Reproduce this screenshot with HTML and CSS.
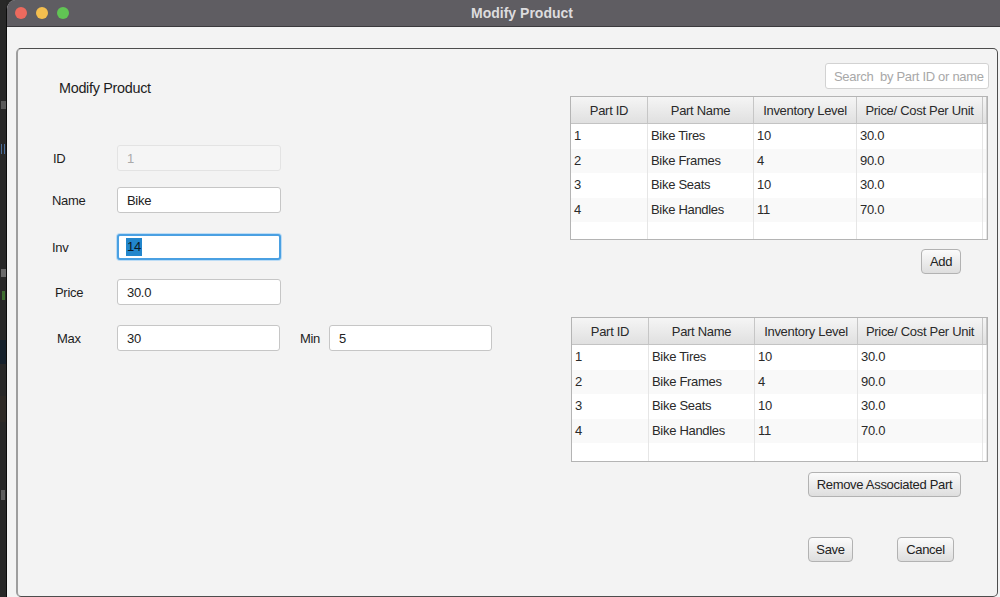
FILE: index.html
```html
<!DOCTYPE html>
<html>
<head>
<meta charset="utf-8">
<title>Modify Product</title>
<link rel="stylesheet" href="styles.css">
</head>
<body>
<div class="desktop">
  <div class="strip">
    <span class="blk blk-la"></span>
    <span class="blk blk-bars"></span>
    <span class="blk blk-e"></span>
    <span class="blk blk-t"></span>
    <span class="blk blk-blue"></span>
    <span class="blk blk-brown"></span>
    <span class="blk blk-j"></span>
  </div>
  <div class="window">
    <div class="titlebar">
      <div class="lights">
        <span class="light red"></span>
        <span class="light yellow"></span>
        <span class="light green"></span>
      </div>
      <div class="title">Modify Product</div>
    </div>
    <div class="content">
      <div class="panel">
        <div class="left">
          <div class="heading">Modify Product</div>
          <div class="form">
            <div class="frow">
              <span class="lbl">ID</span>
              <div class="field disabled">1</div>
            </div>
            <div class="frow r-name">
              <span class="lbl lbl-name">Name</span>
              <div class="field">Bike</div>
            </div>
            <div class="frow r-inv">
              <span class="lbl lbl-name">Inv</span>
              <div class="field focus"><span class="sel">14</span></div>
            </div>
            <div class="frow r-price">
              <span class="lbl lbl-price">Price</span>
              <div class="field">30.0</div>
            </div>
            <div class="frow r-max">
              <span class="lbl lbl-max">Max</span>
              <div class="field narrow">30</div>
              <span class="lbl-min">Min</span>
              <div class="field narrow">5</div>
            </div>
          </div>
        </div>
        <div class="right">
          <div class="search">Search  by Part ID or name</div>
          <div class="table t1">
            <div class="thead">
              <div class="th c1">Part ID</div>
              <div class="th c2">Part Name</div>
              <div class="th c3">Inventory Level</div>
              <div class="th c4">Price/ Cost Per Unit</div>
              <div class="th c5"></div>
            </div>
            <div class="tr">
              <div class="td c1">1</div><div class="td c2">Bike Tires</div><div class="td c3">10</div><div class="td c4">30.0</div><div class="td c5"></div>
            </div>
            <div class="tr alt">
              <div class="td c1">2</div><div class="td c2">Bike Frames</div><div class="td c3">4</div><div class="td c4">90.0</div><div class="td c5"></div>
            </div>
            <div class="tr">
              <div class="td c1">3</div><div class="td c2">Bike Seats</div><div class="td c3">10</div><div class="td c4">30.0</div><div class="td c5"></div>
            </div>
            <div class="tr alt">
              <div class="td c1">4</div><div class="td c2">Bike Handles</div><div class="td c3">11</div><div class="td c4">70.0</div><div class="td c5"></div>
            </div>
            <div class="tr">
              <div class="td c1"></div><div class="td c2"></div><div class="td c3"></div><div class="td c4"></div><div class="td c5"></div>
            </div>
          </div>
          <div class="btn btn-add">Add</div>
          <div class="table t2">
            <div class="thead">
              <div class="th c1">Part ID</div>
              <div class="th c2">Part Name</div>
              <div class="th c3">Inventory Level</div>
              <div class="th c4">Price/ Cost Per Unit</div>
              <div class="th c5"></div>
            </div>
            <div class="tr">
              <div class="td c1">1</div><div class="td c2">Bike Tires</div><div class="td c3">10</div><div class="td c4">30.0</div><div class="td c5"></div>
            </div>
            <div class="tr alt">
              <div class="td c1">2</div><div class="td c2">Bike Frames</div><div class="td c3">4</div><div class="td c4">90.0</div><div class="td c5"></div>
            </div>
            <div class="tr">
              <div class="td c1">3</div><div class="td c2">Bike Seats</div><div class="td c3">10</div><div class="td c4">30.0</div><div class="td c5"></div>
            </div>
            <div class="tr alt">
              <div class="td c1">4</div><div class="td c2">Bike Handles</div><div class="td c3">11</div><div class="td c4">70.0</div><div class="td c5"></div>
            </div>
            <div class="tr">
              <div class="td c1"></div><div class="td c2"></div><div class="td c3"></div><div class="td c4"></div><div class="td c5"></div>
            </div>
          </div>
          <div class="btn btn-remove">Remove Associated Part</div>
          <div class="actions">
            <div class="btn btn-save">Save</div>
            <div class="btn btn-cancel">Cancel</div>
          </div>
        </div>
      </div>
    </div>
  </div>
</div>
</body>
</html>
```
FILE: styles.css
```css
* {
  box-sizing: border-box;
  margin: 0;
  padding: 0;
}

html, body {
  width: 1000px;
  height: 597px;
  overflow: hidden;
}

body {
  font-family: "Liberation Sans", Arial, sans-serif;
  font-size: 13px;
  color: #222;
  letter-spacing: -0.3px;
  background: #262626;
}

.desktop {
  display: flex;
  height: 597px;
}

/* desktop strip left of the window (unreadable fragments of another app) */
.strip {
  width: 6px;
  flex: none;
  background: #282828;
  overflow: hidden;
  display: flex;
  flex-direction: column;
}

.blk { display: block; flex: none; }
.blk-la { margin-top: 101px; height: 8px; width: 5px; margin-left: 1px; background: #5a5a5a; }
.blk-bars { margin-top: 35px; height: 10px; width: 4px; margin-left: 1px; border-left: 1px solid #4d6f9c; border-right: 1px solid #4d6f9c; }
.blk-e { margin-top: 115px; height: 8px; width: 5px; margin-left: 1px; background: #6a6a6a; }
.blk-t { margin-top: 14px; height: 9px; width: 3px; margin-left: 2px; background: #3f6e31; }
.blk-blue { margin-top: 40px; height: 24px; background: #16212c; }
.blk-brown { margin-top: 32px; height: 26px; background: #2e2a26; }
.blk-j { margin-top: 68px; height: 10px; width: 4px; margin-left: 1px; background: #5e5e5e; }

/* window */
.window {
  flex: 1;
  display: flex;
  flex-direction: column;
  border-left: 1px solid #0c0c0c;
  border-top-left-radius: 9px;
  background: #f3f3f3;
  overflow: hidden;
}

.titlebar {
  height: 27px;
  flex: none;
  background: #5f5d62;
  border-bottom: 1px solid #3b3a3d;
  display: flex;
  align-items: center;
}

.lights {
  display: flex;
  gap: 9px;
  padding-left: 8px;
}

.light {
  width: 12px;
  height: 12px;
  border-radius: 50%;
}

.red { background: #ec6a5e; }
.yellow { background: #f4bf4f; }
.green { background: #61c554; }

.title {
  flex: 1;
  text-align: center;
  padding-right: 25px;
  font-weight: bold;
  font-size: 14px;
  letter-spacing: 0;
  color: #dddcde;
}

.content {
  flex: 1;
  padding: 21px 0 0 9px;
}

.panel {
  width: 982px;
  height: 549px;
  border: 1px solid #4d4d4d;
  border-left: 2px solid #9e9e9e;
  border-radius: 5px;
  display: flex;
  background: #f3f3f3;
}

/* left form */
.left {
  width: 552px;
  flex: none;
  padding-top: 31px;
}

.heading {
  padding-left: 41px;
  line-height: 17px;
  font-size: 14.4px;
  color: #1d1d1d;
}

.form {
  margin-top: 48px;
  padding-left: 35px;
  display: flex;
  flex-direction: column;
}

.frow {
  display: flex;
  align-items: center;
  height: 26px;
}

.r-name { margin-top: 16px; }
.r-inv { margin-top: 21px; }
.r-price { margin-top: 19px; }
.r-max { margin-top: 20px; }

.lbl {
  width: 64px;
  flex: none;
  color: #1d1d1d;
}

.lbl-name { margin-left: -1px; width: 65px; }
.lbl-price { padding-left: 2px; }
.lbl-max { padding-left: 4px; }

.lbl-min {
  margin-left: 20px;
  margin-right: 9px;
  color: #1d1d1d;
}

.field {
  width: 164px;
  height: 26px;
  flex: none;
  background: #fff;
  border: 1px solid #c6c6c6;
  border-radius: 3px;
  padding-left: 9px;
  display: flex;
  align-items: center;
  color: #222;
}

.field.narrow { width: 163px; }

.field.disabled {
  background: #f5f5f5;
  border-color: #e3e3e3;
  color: #aaa;
}

.field.focus {
  border: 2px solid #4aa0e2;
  box-shadow: 0 0 0 1px #bcdcf5;
  padding-left: 7px;
}

.sel {
  background: #2286cc;
  color: #0c1a26;
  line-height: 18px;
  padding: 0 1px;
}

/* right side */
.right {
  width: 419px;
  flex: none;
  display: flex;
  flex-direction: column;
  padding-top: 14px;
}

.search {
  align-self: flex-end;
  width: 164px;
  height: 26px;
  background: #fff;
  border: 1px solid #d2d2d2;
  border-radius: 3px;
  padding-left: 8px;
  display: flex;
  align-items: center;
  color: #a8a8a8;
  white-space: pre;
}

.table {
  width: 418px;
  background: #fff;
  border: 1px solid #b4b4b4;
  overflow: hidden;
}

.t1 {
  margin-top: 7px;
  height: 144px;
}

.t2 {
  margin-top: 43px;
  margin-left: 1px;
  width: 417px;
  height: 145px;
}

.thead {
  display: flex;
  height: 27px;
  background: linear-gradient(#f5f5f5, #e0e0e0);
  border-bottom: 1px solid #c3c3c3;
}

.th {
  display: flex;
  align-items: center;
  justify-content: center;
  border-right: 1px solid #c6c6c6;
  color: #2a2a2a;
}

.tr {
  display: flex;
  height: 24.5px;
}

.tr.alt { background: #f9f9f9; }

.td {
  display: flex;
  align-items: center;
  padding-left: 3px;
  padding-bottom: 1px;
  border-right: 1px solid #e6e6e6;
  color: #2a2a2a;
}

.c1 { width: 77px; flex: none; }
.c2 { width: 106px; flex: none; }
.c3 { width: 103px; flex: none; }
.c4 { width: 126px; flex: none; }
.c5 { flex: 1; }
.t2 .c4 { width: 125px; }

/* buttons */
.btn {
  height: 25px;
  display: flex;
  align-items: center;
  justify-content: center;
  background: linear-gradient(#fbfbfb, #dedede);
  border: 1px solid #b2b2b2;
  border-radius: 4px;
  color: #222;
}

.btn-add {
  align-self: flex-end;
  margin-top: 9px;
  margin-right: 28px;
  width: 40px;
}

.btn-remove {
  align-self: flex-end;
  margin-top: 10px;
  margin-right: 28px;
  width: 153px;
}

.actions {
  margin-top: 40px;
  display: flex;
  justify-content: flex-end;
  gap: 44px;
  padding-right: 35px;
}

.btn-save { width: 45px; }
.btn-cancel { width: 57px; }
```
